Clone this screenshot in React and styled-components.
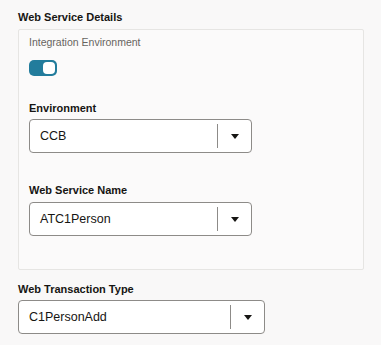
import React from 'react';
import styled, { createGlobalStyle } from 'styled-components';

const GlobalStyle = createGlobalStyle`
  body {
    margin: 0;
    background: #f9f8f8;
    font-family: "Liberation Sans", Arial, sans-serif;
    color: #161513;
  }
`;

const Page = styled.div`
  padding: 10px 17px 0 18px;
`;

const Title = styled.div`
  font-size: 11px;
  line-height: 14px;
  font-weight: 700;
  margin-bottom: 5px;
`;

// Bordered group holding the integration fields
const Panel = styled.div`
  width: 346px;
  height: 241px;
  box-sizing: border-box;
  border: 1px solid #e6e5e3;
  border-radius: 2px;
  background: #fbfafa;
  padding: 5px 10px 0;
`;

const Hint = styled.div`
  font-size: 10.5px;
  line-height: 14px;
  color: #67645f;
  margin-bottom: 11px;
`;

const Toggle = styled.div`
  width: 28px;
  height: 16px;
  box-sizing: border-box;
  border-radius: 5px;
  background: #227c9c;
  display: flex;
  align-items: center;
  justify-content: flex-end;
  padding-right: 2px;
  margin-bottom: ${p => p.$gap || 0}px;

  span {
    width: 12px;
    height: 12px;
    border-radius: 4px;
    background: #fff;
  }
`;

const Field = styled.div`
  margin-top: ${p => p.$top || 0}px;
  margin-bottom: ${p => p.$gap || 0}px;
`;

const Label = styled.div`
  font-size: 11px;
  line-height: 14px;
  font-weight: 700;
  margin-bottom: ${p => p.$gap || 4}px;
`;

const Select = styled.div`
  width: ${p => p.$width}px;
  height: 34px;
  box-sizing: border-box;
  border: 1px solid #8d8b88;
  border-radius: 4px;
  background: #fff;
  display: flex;
  align-items: center;
`;

const Value = styled.div`
  flex: 1;
  padding-left: 10px;
  font-size: 12.5px;
  color: #161513;
`;

const Arrow = styled.div`
  width: 33px;
  height: 24px;
  border-left: 1px solid #8d8b88;
  display: flex;
  align-items: center;
  justify-content: center;

  &::after {
    content: '';
    border-left: 4px solid transparent;
    border-right: 4px solid transparent;
    border-top: 5px solid #161513;
  }
`;

const Dropdown = ({ value, width }) => (
  <Select $width={width}>
    <Value>{value}</Value>
    <Arrow />
  </Select>
);

export default function App() {
  return (
    <>
      <GlobalStyle />
      <Page>
        <Title>Web Service Details</Title>
        <Panel>
          <Hint>Integration Environment</Hint>
          <Toggle $gap={25}><span /></Toggle>
          <Field $gap={30}>
            <Label>Environment</Label>
            <Dropdown value="CCB" width={223} />
          </Field>
          <Field>
            <Label $gap={5}>Web Service Name</Label>
            <Dropdown value="ATC1Person" width={223} />
          </Field>
        </Panel>
        <Field $top={12}>
          <Label>Web Transaction Type</Label>
          <Dropdown value="C1PersonAdd" width={247} />
        </Field>
      </Page>
    </>
  );
}
